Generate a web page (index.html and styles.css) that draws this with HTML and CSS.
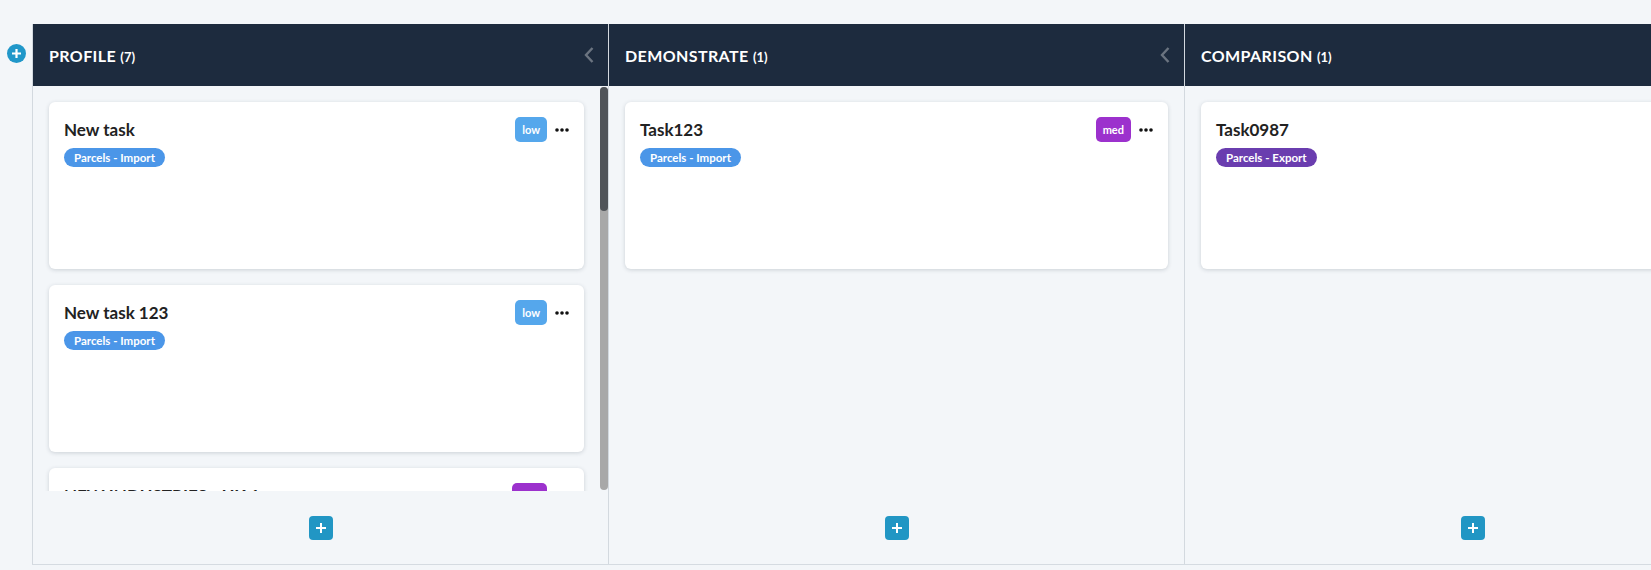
FILE: index.html
```html
<!DOCTYPE html>
<html>
<head>
    <title>Board</title>
    <link rel="stylesheet" href="styles.css">
</head>
<body>
    <div class="page">
        <div class="side">
            <button class="add-column" title="Add column">
                <svg width="19" height="19" viewBox="0 0 19 19"><circle cx="9.5" cy="9.5" r="9.5" fill="#2097c9"/><path d="M9.5 5v9M5 9.5h9" stroke="#fff" stroke-width="2.2"/></svg>
            </button>
        </div>

        <div class="board">
            <!-- column 1 -->
            <section class="column">
                <header class="col-head">
                    <h2>PROFILE <span class="count">(7)</span></h2>
                    <svg class="chevron" width="10" height="16" viewBox="0 0 10 16"><path d="M8.5 1L2 8l6.5 7" fill="none" stroke="#6b7480" stroke-width="2.4"/></svg>
                </header>
                <div class="col-body">
                    <div class="task-list">
                        <div class="card">
                            <div class="card-top">
                                <h3>New task</h3>
                                <div class="card-actions">
                                    <span class="prio low">low</span>
                                    <svg class="dots" width="14" height="4" viewBox="0 0 14 4"><circle cx="2" cy="2" r="1.8"/><circle cx="7" cy="2" r="1.8"/><circle cx="12" cy="2" r="1.8"/></svg>
                                </div>
                            </div>
                            <span class="tag import">Parcels - Import</span>
                        </div>
                        <div class="card">
                            <div class="card-top">
                                <h3>New task 123</h3>
                                <div class="card-actions">
                                    <span class="prio low">low</span>
                                    <svg class="dots" width="14" height="4" viewBox="0 0 14 4"><circle cx="2" cy="2" r="1.8"/><circle cx="7" cy="2" r="1.8"/><circle cx="12" cy="2" r="1.8"/></svg>
                                </div>
                            </div>
                            <span class="tag import">Parcels - Import</span>
                        </div>
                        <div class="card">
                            <div class="card-top">
                                <h3>NEW INDUSTRIES - UK 1</h3>
                                <div class="card-actions">
                                    <span class="prio med">med</span>
                                    <svg class="dots" width="14" height="4" viewBox="0 0 14 4"><circle cx="2" cy="2" r="1.8"/><circle cx="7" cy="2" r="1.8"/><circle cx="12" cy="2" r="1.8"/></svg>
                                </div>
                            </div>
                        </div>
                    </div>
                    <div class="scrollbar"><div class="thumb"></div></div>
                </div>
                <div class="col-foot">
                    <button class="add-task" title="Add task">
                        <svg width="12" height="12" viewBox="0 0 12 12"><path d="M6 1v10M1 6h10" stroke="#fff" stroke-width="2"/></svg>
                    </button>
                </div>
            </section>

            <!-- column 2 -->
            <section class="column">
                <header class="col-head">
                    <h2>DEMONSTRATE <span class="count">(1)</span></h2>
                    <svg class="chevron" width="10" height="16" viewBox="0 0 10 16"><path d="M8.5 1L2 8l6.5 7" fill="none" stroke="#6b7480" stroke-width="2.4"/></svg>
                </header>
                <div class="col-body">
                    <div class="task-list">
                        <div class="card">
                            <div class="card-top">
                                <h3>Task123</h3>
                                <div class="card-actions">
                                    <span class="prio med">med</span>
                                    <svg class="dots" width="14" height="4" viewBox="0 0 14 4"><circle cx="2" cy="2" r="1.8"/><circle cx="7" cy="2" r="1.8"/><circle cx="12" cy="2" r="1.8"/></svg>
                                </div>
                            </div>
                            <span class="tag import">Parcels - Import</span>
                        </div>
                    </div>
                </div>
                <div class="col-foot">
                    <button class="add-task" title="Add task">
                        <svg width="12" height="12" viewBox="0 0 12 12"><path d="M6 1v10M1 6h10" stroke="#fff" stroke-width="2"/></svg>
                    </button>
                </div>
            </section>

            <!-- column 3 -->
            <section class="column">
                <header class="col-head">
                    <h2>COMPARISON <span class="count">(1)</span></h2>
                </header>
                <div class="col-body">
                    <div class="task-list">
                        <div class="card">
                            <div class="card-top">
                                <h3>Task0987</h3>
                            </div>
                            <span class="tag export">Parcels - Export</span>
                        </div>
                    </div>
                </div>
                <div class="col-foot">
                    <button class="add-task" title="Add task">
                        <svg width="12" height="12" viewBox="0 0 12 12"><path d="M6 1v10M1 6h10" stroke="#fff" stroke-width="2"/></svg>
                    </button>
                </div>
            </section>
        </div>
    </div>
</body>
</html>
```

FILE: styles.css
```css
body {
    margin: 0;
    background-color: #f3f6f9;
    font-family: Lato, "Open Sans", Arial, sans-serif;
    color: #222;
    overflow: hidden;
}

.page {
    display: flex;
    padding-top: 24px;
}

.side {
    width: 32px;
    flex-shrink: 0;
    padding: 20px 0 0 7px;
    box-sizing: border-box;
}

.add-column {
    display: block;
    padding: 0;
    border: none;
    background: none;
    cursor: pointer;
    line-height: 0;
}

.board {
    display: flex;
    border-bottom: 1px solid #d5dbe1;
}

.column {
    width: 576px;
    flex-shrink: 0;
    display: flex;
    flex-direction: column;
    border-left: 1px solid #d3d9df;
    box-sizing: border-box;
}

.col-head {
    height: 62px;
    background-color: #1d2b3e;
    display: flex;
    align-items: center;
    justify-content: space-between;
    padding: 0 14px 0 16px;
}

.col-head h2 {
    margin: 0;
    color: #fff;
    font-size: 16px;
    font-weight: 700;
    letter-spacing: 0.4px;
}

.col-head .count {
    font-size: 13px;
    letter-spacing: 0;
}

.col-body {
    height: 405px;
    display: flex;
}

.task-list {
    flex: 1;
    overflow: hidden;
    padding: 16px 16px 0 16px;
    display: flex;
    flex-direction: column;
    gap: 16px;
}

/* fake scrollbar, the real one is hidden in the screenshot browser */
.scrollbar {
    width: 8px;
    margin: 1px 0;
    background-color: #a8a8a8;
    border-radius: 4px;
}

.scrollbar .thumb {
    height: 124px;
    background-color: #505459;
    border-radius: 4px;
}

.card {
    flex-shrink: 0;
    height: 167px;
    box-sizing: border-box;
    background-color: #fff;
    border-radius: 6px;
    box-shadow: 0 1px 4px rgba(30, 45, 60, 0.18);
    padding: 15px 15px 0 15px;
}

.card-top {
    display: flex;
    justify-content: space-between;
    align-items: center;
    height: 25px;
}

.card-top h3 {
    margin: 0;
    font-size: 17px;
    font-weight: 700;
    color: #222;
    white-space: nowrap;
}

.card-actions {
    display: flex;
    align-items: center;
    gap: 8px;
}

.prio {
    display: inline-block;
    height: 25px;
    line-height: 25px;
    padding: 0 7px;
    border-radius: 5px;
    color: #fff;
    font-size: 11px;
    font-weight: 700;
}

.prio.low {
    background-color: #55a7ec;
}

.prio.med {
    background-color: #9c31cd;
}

.dots {
    fill: #111;
}

.tag {
    display: inline-block;
    margin-top: 6px;
    height: 19px;
    line-height: 19px;
    padding: 0 10px;
    border-radius: 10px;
    color: #fff;
    font-size: 11.5px;
    font-weight: 700;
}

.tag.import {
    background-color: #4b96e8;
}

.tag.export {
    background-color: #6a3daf;
}

.col-foot {
    height: 73px;
    display: flex;
    align-items: center;
    justify-content: center;
}

.add-task {
    width: 24px;
    height: 24px;
    padding: 0;
    border: none;
    border-radius: 4px;
    background-color: #2196c4;
    cursor: pointer;
    display: flex;
    align-items: center;
    justify-content: center;
}
```
